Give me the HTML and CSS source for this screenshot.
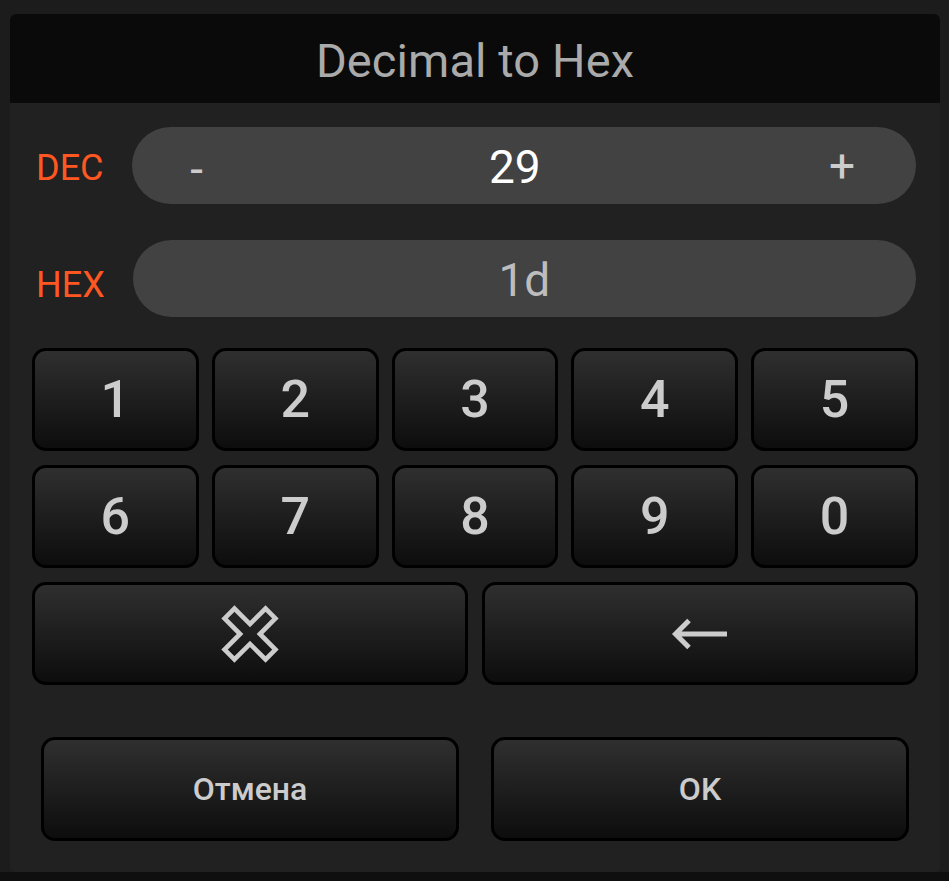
FILE: index.html
```html
<!DOCTYPE html>
<html lang="ru">
<head>
<meta charset="utf-8">
<title>Decimal to Hex</title>
<link rel="stylesheet" href="styles.css">
</head>
<body>
<div class="screen">
  <div class="dialog">
    <div class="header"><h1 class="title">Decimal to Hex</h1></div>
    <div class="content">
      <div class="field-row">
        <span class="label">DEC</span>
        <div class="pill">
          <span class="step minus">-</span>
          <span class="value">29</span>
          <span class="step plus">+</span>
        </div>
      </div>
      <div class="field-row hex-row">
        <span class="label hex-label">HEX</span>
        <div class="pill">
          <span class="value hex">1d</span>
        </div>
      </div>
      <div class="keypad">
        <button class="key">1</button>
        <button class="key">2</button>
        <button class="key">3</button>
        <button class="key">4</button>
        <button class="key">5</button>
        <button class="key">6</button>
        <button class="key">7</button>
        <button class="key">8</button>
        <button class="key">9</button>
        <button class="key">0</button>
        <div class="wide-row">
          <button class="key">
            <svg class="icon-clear" width="58" height="58" viewBox="-29 -29 58 58">
              <polygon transform="rotate(45)" points="7,-29 7,-7 29,-7 29,7 7,7 7,29 -7,29 -7,7 -29,7 -29,-7 -7,-7 -7,-29" fill="none" stroke="#cccccc" stroke-width="4.6" stroke-linejoin="miter"/>
            </svg>
          </button>
          <button class="key">
            <svg class="icon-back" width="58" height="32" viewBox="0 0 58 32">
              <path d="M4 16 H56 M18 2.5 L4.5 16 L18 29.5" fill="none" stroke="#cccccc" stroke-width="5" stroke-linecap="butt" stroke-linejoin="miter"/>
            </svg>
          </button>
        </div>
      </div>
      <div class="actions">
        <button class="key action">Отмена</button>
        <button class="key action">OK</button>
      </div>
    </div>
  </div>
</div>
<div class="navbar"></div>
</body>
</html>
```
FILE: styles.css
```css
html, body {
  margin: 0;
  padding: 0;
  height: 100%;
  overflow: hidden;
  background: #0f0f0f;
  font-family: Roboto, "Noto Sans", "DejaVu Sans", sans-serif;
}

.screen {
  height: 872px;
  box-sizing: border-box;
  padding: 14px 9px 0 10px;
  background: #1c1c1c;
}

.dialog {
  height: 858px;
  background: #212121;
  border-radius: 6px 6px 4px 4px;
  overflow: hidden;
  display: flex;
  flex-direction: column;
}

.header {
  height: 89px;
  background: #0a0a0a;
  display: flex;
  align-items: center;
  justify-content: center;
}

.title {
  margin: 0;
  padding-top: 4px;
  font-size: 47px;
  font-weight: 400;
  color: #aaaaaa;
  letter-spacing: 0.1px;
}

.content {
  display: flex;
  flex-direction: column;
}

.field-row {
  display: flex;
  align-items: center;
  margin: 24px 24px 0 26px;
  height: 77px;
}

.hex-row {
  margin-top: 36px;
}

.label {
  flex: none;
  font-size: 36px;
  color: #ff5722;
  margin-right: 28px;
  padding-top: 4px;
}

.hex-label {
  padding-top: 13px;
}

.pill {
  flex: 1;
  height: 77px;
  border-radius: 39px;
  background: #424242;
  display: flex;
  align-items: center;
}

.step {
  flex: none;
  text-align: center;
  color: #cccccc;
  font-size: 46px;
  line-height: 1;
}

.minus {
  width: 130px;
  padding-top: 6px;
}

.plus {
  width: 148px;
}

.value {
  flex: 1;
  text-align: center;
  font-size: 46px;
  color: #ffffff;
  line-height: 1;
  padding-top: 2px;
}

.value.hex {
  color: #bdbdbd;
}

.keypad {
  margin: 31px 22px 0 22px;
  display: grid;
  grid-template-columns: repeat(5, 1fr);
  grid-auto-rows: 103px;
  column-gap: 13px;
  row-gap: 14px;
}

.wide-row {
  grid-column: 1 / -1;
  display: grid;
  grid-template-columns: 1fr 1fr;
  column-gap: 14px;
}

.key {
  margin: 0;
  padding: 0;
  border: 3px solid #000000;
  border-radius: 14px;
  background: linear-gradient(#2f2f2f, #0d0d0d);
  color: #cccccc;
  font-family: Roboto, "Noto Sans", "DejaVu Sans", sans-serif;
  font-size: 52px;
  font-weight: 500;
  display: flex;
  align-items: center;
  justify-content: center;
  box-sizing: border-box;
}

.icon-clear, .icon-back {
  display: block;
}

.actions {
  margin: 52px 31px 0 31px;
  display: grid;
  grid-template-columns: 1fr 1fr;
  column-gap: 32px;
  height: 104px;
}

.key.action {
  font-size: 32px;
  font-weight: 500;
}

.navbar {
  height: 9px;
  background: #0f0f0f;
}
```
